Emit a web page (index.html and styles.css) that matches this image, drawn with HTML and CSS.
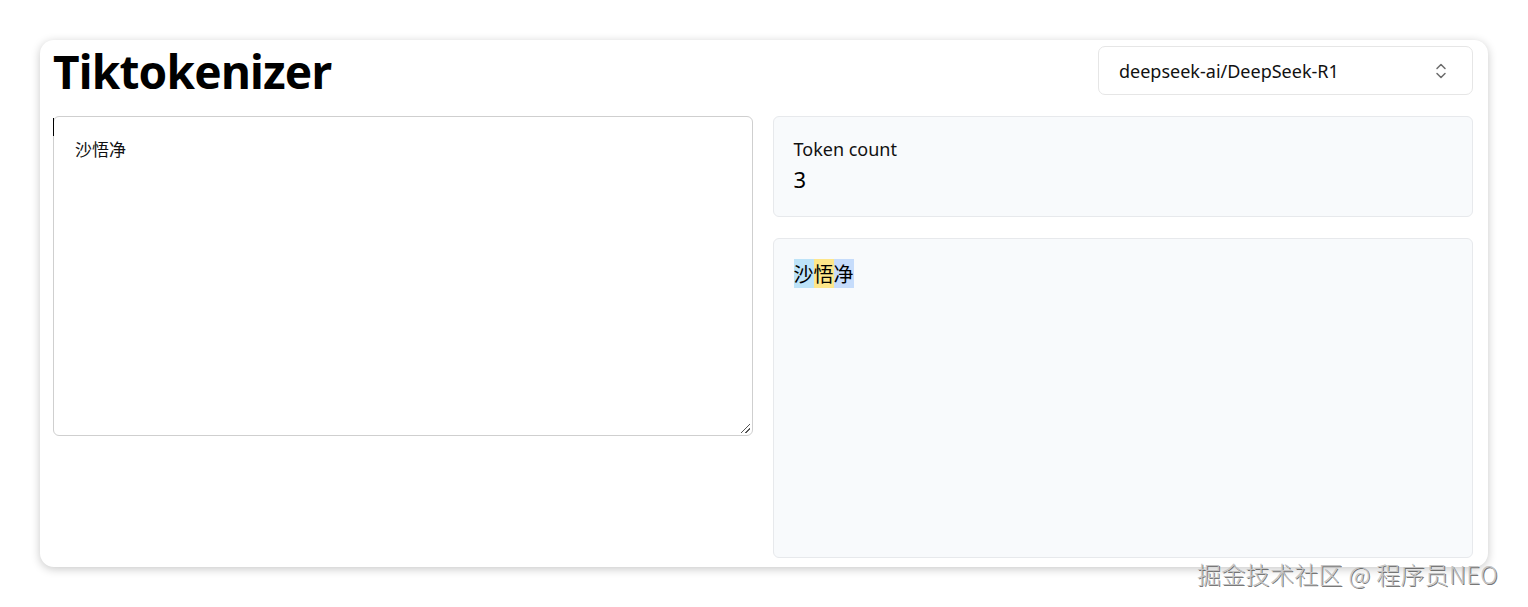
FILE: index.html
```html
<!DOCTYPE html>
<html lang="zh">
<head>
<meta charset="utf-8">
<title>Tiktokenizer</title>
<link rel="stylesheet" href="styles.css">
</head>
<body>
<main class="card">
  <header class="top">
    <h1 class="title">Tiktokenizer</h1>
    <div class="select">
      <span>deepseek-ai/DeepSeek-R1</span>
      <svg class="chev" width="14" height="20" viewBox="0 0 14 20" fill="none" stroke="#6b6b6b" stroke-width="1.5" stroke-linecap="round" stroke-linejoin="round"><path d="M3 7.5 L7 3.5 L11 7.5"/><path d="M3 12.5 L7 16.5 L11 12.5"/></svg>
    </div>
  </header>
  <section class="cols">
    <div class="left">
      <div class="textarea"><span class="caret"></span>沙悟净<span class="grip"></span></div>
    </div>
    <div class="right">
      <div class="panel count">
        <div class="label">Token count</div>
        <div class="num">3</div>
      </div>
      <div class="panel tokens">
        <span class="t1">沙</span><span class="t2">悟</span><span class="t3">净</span>
      </div>
    </div>
  </section>
</main>
<div class="watermark">掘金技术社区 @ 程序员NEO</div>
</body>
</html>
```
FILE: styles.css
```css
html, body { margin: 0; padding: 0; background: #fff; }
body {
  width: 1528px; height: 607px; overflow: hidden; position: relative;
  font-family: "Noto Sans", "Noto Sans CJK SC", sans-serif; color: #000;
}
.card {
  margin: 40px 0 0 40px; width: 1448px; height: 527px; box-sizing: border-box;
  background: #fff; border-radius: 14px;
  box-shadow: 0 2px 10px rgba(0,0,0,0.22);
  padding: 6px 15px 10px 13px;
}
.top { display: flex; justify-content: space-between; align-items: flex-start; height: 70px; }
.title { margin: 0; font-size: 46px; font-weight: 700; line-height: 50px; letter-spacing: -0.8px; }
.select {
  width: 375px; height: 49px; box-sizing: border-box; border: 1px solid #e6e6e6; border-radius: 7px;
  display: flex; align-items: center; justify-content: space-between; padding: 0 24px 0 20px;
  font-size: 18px; color: #111;
}
.chev { display: block; }
.cols { display: flex; gap: 20px; }
.left { width: 700px; }
.textarea {
  position: relative; height: 320px; box-sizing: border-box; border: 1px solid #cfcfcf; border-radius: 6px;
  padding: 20px 21px; font-size: 17px; line-height: 24px; color: #111;
  font-family: "Noto Sans CJK SC", sans-serif;
}
.caret { position: absolute; left: -1px; top: 1px; width: 1px; height: 18px; background: #000; }
.grip {
  position: absolute; right: 2px; bottom: 2px; width: 9px; height: 9px;
  background: linear-gradient(135deg, transparent 45%, #555 45%, #555 55%, transparent 55%, transparent 70%, #555 70%, #555 80%, transparent 80%);
}
.right { width: 701px; display: flex; flex-direction: column; gap: 21px; }
.panel {
  box-sizing: border-box; background: #f8fafc; border: 1px solid #e7e9ec; border-radius: 6px;
  padding: 20px 20px;
}
.count { height: 101px; padding-top: 19px; }
.label { font-size: 18px; line-height: 26px; color: #111; }
.num { font-size: 22px; line-height: 28px; margin-top: 3px; }
.tokens { height: 320px; padding-top: 22px; font-family: "Noto Sans CJK SC", sans-serif; font-size: 20px; line-height: 25px; }
.t1 { background: #bde3f8; }
.t2 { background: #fde68a; }
.t3 { background: #c6dcfb; }
.watermark {
  position: absolute; left: 1197px; top: 558px; font-size: 24px; line-height: 32px; font-weight: 300;
  font-family: "Noto Sans CJK SC", sans-serif; color: #c4c4c4; letter-spacing: 0.3px;
  text-shadow: 1px 1px 0 rgba(60,60,60,0.7);
}
```
